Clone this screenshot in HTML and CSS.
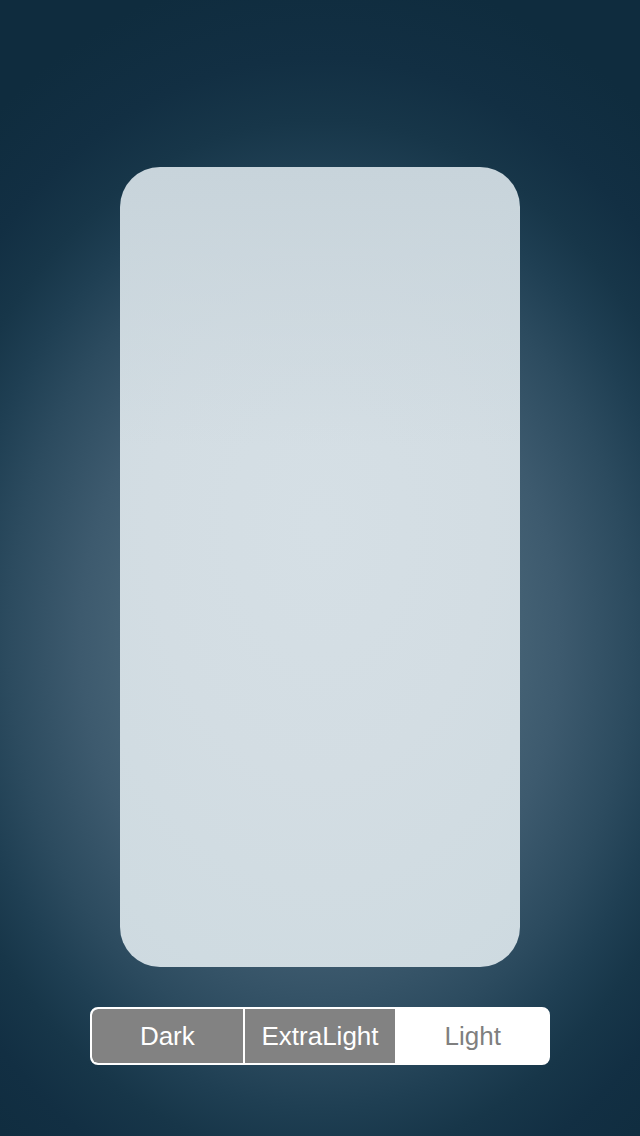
FILE: index.html
```html
<!DOCTYPE html>
<html>
<head>
<meta charset="utf-8">
<link rel="stylesheet" href="styles.css">
</head>
<body>
<main class="screen">
  <div class="card"></div>
  <div class="segmented">
    <div class="seg seg-on">Dark</div>
    <div class="seg seg-on">ExtraLight</div>
    <div class="seg seg-off">Light</div>
  </div>
</main>
</body>
</html>
```
FILE: styles.css
```css
html, body {
  margin: 0;
  padding: 0;
}
body {
  width: 640px;
  height: 1136px;
  overflow: hidden;
  font-family: "Liberation Sans", Arial, sans-serif;
}
.screen {
  width: 640px;
  height: 1136px;
  box-sizing: border-box;
  padding-top: 167px;
  display: flex;
  flex-direction: column;
  align-items: center;
  background:
    radial-gradient(ellipse 400px 520px at 320px 640px,
      #4f6e81 0%, #4a6779 40%, #3d5a6e 60%, #2c4b5f 78%, #1f3f53 90%, #173649 100%, #122f43 112%, #0f2c3e 130%);
  background-color: #0f2c3e;
}
.card {
  width: 400px;
  height: 800px;
  border-radius: 40px;
  background:
    linear-gradient(to bottom, rgba(200, 212, 219, 1) 0%, rgba(200, 212, 219, 0) 35%),
    radial-gradient(ellipse 420px 620px at 200px 360px,
      #d5dfe5 0%, #d3dde3 40%, #cfdbe1 75%, #ccd8df 100%);
}
.segmented {
  margin-top: 40px;
  width: 460px;
  height: 58px;
  box-sizing: border-box;
  border: 2px solid #ffffff;
  border-radius: 8px;
  background: #ffffff;
  display: flex;
  gap: 2px;
  overflow: hidden;
}
.seg {
  flex: 1;
  display: flex;
  align-items: center;
  justify-content: center;
  font-size: 26px;
}
.seg-on {
  background: #828282;
  color: #ffffff;
}
.seg-on:first-child {
  border-radius: 6px 0 0 6px;
}
.seg-off {
  background: #ffffff;
  color: #7f7f7f;
}
```
